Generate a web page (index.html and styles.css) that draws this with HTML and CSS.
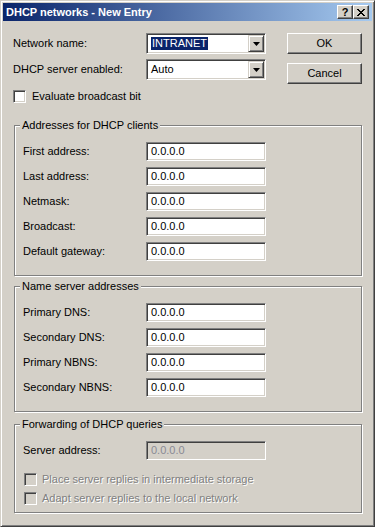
FILE: index.html
```html
<!DOCTYPE html>
<html lang="en">
<head>
  <meta charset="UTF-8" />
  <title>DHCP networks - New Entry</title>
  <link rel="stylesheet" href="styles.css">
</head>
<body>
  <div class="window">
    <div class="titlebar">
      <span class="title">DHCP networks - New Entry</span>
      <div class="title-buttons">
        <span class="tb-btn help">?</span>
        <span class="tb-btn close">
          <svg width="8" height="7" viewBox="0 0 8 7"><path fill="#000" d="M0 0h2v1H0zM6 0h2v1H6zM1 1h2v1H1zM5 1h2v1H5zM2 2h4v1H2zM3 3h2v1H3zM2 4h4v1H2zM1 5h2v1H1zM5 5h2v1H5zM0 6h2v1H0zM6 6h2v1H6z"/></svg>
        </span>
      </div>
    </div>

    <div class="content">
      <div class="top">
        <div class="top-form">
          <div class="row">
            <span class="label">Network name:</span>
            <div class="combo">
              <span class="combo-text"><span class="sel">INTRANET</span></span>
              <span class="combo-btn"><svg width="7" height="4" viewBox="0 0 7 4"><path fill="#000" d="M0 0h7L3.5 4z"/></svg></span>
            </div>
          </div>
          <div class="row">
            <span class="label">DHCP server enabled:</span>
            <div class="combo">
              <span class="combo-text">Auto</span>
              <span class="combo-btn"><svg width="7" height="4" viewBox="0 0 7 4"><path fill="#000" d="M0 0h7L3.5 4z"/></svg></span>
            </div>
          </div>
          <div class="check top-check">
            <span class="box"></span>
            <span>Evaluate broadcast bit</span>
          </div>
        </div>
        <div class="buttons">
          <span class="btn">OK</span>
          <span class="btn">Cancel</span>
        </div>
      </div>

      <fieldset class="group">
        <legend>Addresses for DHCP clients</legend>
        <div class="fields">
          <div class="field-row"><span class="field-label">First address:</span><span class="field">0.0.0.0</span></div>
          <div class="field-row"><span class="field-label">Last address:</span><span class="field">0.0.0.0</span></div>
          <div class="field-row"><span class="field-label">Netmask:</span><span class="field">0.0.0.0</span></div>
          <div class="field-row"><span class="field-label">Broadcast:</span><span class="field">0.0.0.0</span></div>
          <div class="field-row"><span class="field-label">Default gateway:</span><span class="field">0.0.0.0</span></div>
        </div>
      </fieldset>

      <fieldset class="group group-dns">
        <legend>Name server addresses</legend>
        <div class="fields">
          <div class="field-row"><span class="field-label">Primary DNS:</span><span class="field">0.0.0.0</span></div>
          <div class="field-row"><span class="field-label">Secondary DNS:</span><span class="field">0.0.0.0</span></div>
          <div class="field-row"><span class="field-label">Primary NBNS:</span><span class="field">0.0.0.0</span></div>
          <div class="field-row"><span class="field-label">Secondary NBNS:</span><span class="field">0.0.0.0</span></div>
        </div>
      </fieldset>

      <fieldset class="group group-fwd">
        <legend>Forwarding of DHCP queries</legend>
        <div class="fields">
          <div class="field-row"><span class="field-label">Server address:</span><span class="field disabled">0.0.0.0</span></div>
        </div>
        <div class="checks">
          <div class="check disabled"><span class="box"></span><span>Place server replies in intermediate storage</span></div>
          <div class="check disabled"><span class="box"></span><span>Adapt server replies to the local network</span></div>
        </div>
      </fieldset>
    </div>
  </div>
</body>
</html>
```

FILE: styles.css
```css
body {
  margin: 0;
  font-family: "Liberation Sans", Arial, sans-serif;
  font-size: 11px;
  line-height: 13px;
  color: #000;
  background-color: #d4d0c8;
}
.window {
  width: 375px;
  height: 527px;
  box-sizing: border-box;
  background-color: #d4d0c8;
  border: 1px solid;
  border-color: #d4d0c8 #404040 #404040 #d4d0c8;
  box-shadow: inset 1px 1px 0 #fff, inset -1px -1px 0 #808080;
  padding: 2px;
}
.titlebar {
  height: 18px;
  display: flex;
  align-items: center;
  justify-content: space-between;
  padding: 0 3px;
  background: linear-gradient(to right, #0a246a, #a6caf0);
  color: #fff;
  font-weight: bold;
}
.title-buttons {
  display: flex;
}
.tb-btn {
  width: 16px;
  height: 14px;
  box-sizing: border-box;
  display: flex;
  align-items: center;
  justify-content: center;
  background-color: #d4d0c8;
  border: 1px solid;
  border-color: #fff #404040 #404040 #fff;
  box-shadow: inset -1px -1px 0 #808080;
  color: #000;
  font-size: 11px;
  line-height: 11px;
}
.tb-btn.close svg {
  margin: 0 0 0 -1px;
}
.content {
  padding: 12px 10px 0 10px;
}
.top {
  display: flex;
  justify-content: space-between;
}
.row {
  display: flex;
  align-items: center;
  height: 21px;
}
.row + .row {
  margin-top: 5px;
}
.label {
  width: 133px;
}
.combo {
  width: 120px;
  height: 21px;
  box-sizing: border-box;
  display: flex;
  padding: 1px;
  background-color: #fff;
  border: 1px solid;
  border-color: #808080 #fff #fff #808080;
  box-shadow: inset 1px 1px 0 #404040, inset -1px -1px 0 #d4d0c8;
}
.combo-text {
  flex: 1;
  display: flex;
  align-items: center;
  padding-left: 3px;
}
.sel {
  background-color: #0a246a;
  color: #fff;
  padding: 0 1px;
}
.combo-btn {
  width: 16px;
  height: 17px;
  box-sizing: border-box;
  display: flex;
  align-items: center;
  justify-content: center;
  background-color: #d4d0c8;
  border: 1px solid;
  border-color: #d4d0c8 #404040 #404040 #d4d0c8;
  box-shadow: inset 1px 1px 0 #fff, inset -1px -1px 0 #808080;
}
.check {
  display: flex;
  align-items: center;
  height: 13px;
}
.top-check {
  margin-top: 10px;
}
.box {
  width: 13px;
  height: 13px;
  box-sizing: border-box;
  margin-right: 6px;
  background-color: #fff;
  border: 1px solid;
  border-color: #808080 #fff #fff #808080;
  box-shadow: inset 1px 1px 0 #404040, inset -1px -1px 0 #d4d0c8;
}
.buttons {
  display: flex;
  flex-direction: column;
  gap: 9px;
}
.btn {
  width: 75px;
  height: 21px;
  box-sizing: border-box;
  display: flex;
  align-items: center;
  justify-content: center;
  background-color: #d4d0c8;
  border: 1px solid;
  border-color: #fff #404040 #404040 #fff;
  box-shadow: inset -1px -1px 0 #808080;
}
.group {
  margin: 16px 0 0 1px;
  padding: 10px 8px 14px 8px;
  border: 1px solid #808080;
  box-shadow: inset 1px 1px 0 #fff, 1px 1px 0 #fff;
  min-width: 0;
}
.group legend {
  margin-left: -3px;
  padding: 0 2px;
  background-color: #d4d0c8;
}
.group-dns {
  margin-top: 4px;
}
.group-fwd {
  margin-top: 6px;
  padding-bottom: 7px;
}
.fields {
  display: flex;
  flex-direction: column;
  gap: 6px;
}
.field-row {
  display: flex;
  align-items: center;
  height: 19px;
}
.field-label {
  width: 123px;
}
.field {
  width: 120px;
  height: 19px;
  box-sizing: border-box;
  display: flex;
  align-items: center;
  padding-left: 4px;
  background-color: #fff;
  border: 1px solid;
  border-color: #808080 #fff #fff #808080;
  box-shadow: inset 1px 1px 0 #404040, inset -1px -1px 0 #d4d0c8;
}
.field.disabled {
  background-color: #d4d0c8;
  color: #8a8a94;
}
.checks {
  display: flex;
  flex-direction: column;
  gap: 6px;
  margin-top: 13px;
}
.check.disabled {
  color: #808080;
  text-shadow: 1px 1px 0 #fff;
}
.check.disabled .box {
  margin-left: 1px;
  margin-right: 5px;
  background-color: #d4d0c8;
}
```
